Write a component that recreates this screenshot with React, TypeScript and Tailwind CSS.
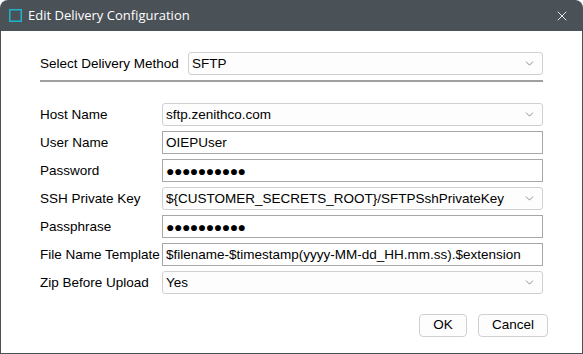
import { ChevronDown, X } from "lucide-react";

const font = { fontFamily: '"Liberation Sans", Arial, sans-serif' };

function SelectBox({ value }: { value: string }) {
  return (
    <div className="flex items-center justify-between h-[23px] flex-1 rounded-[3px] border border-[#d0d0d0] bg-[#fdfdfd] pl-[3px] pr-[6px]">
      <span className="text-[13.5px] text-black leading-none">{value}</span>
      <ChevronDown size={13} strokeWidth={1.2} className="text-[#555]" />
    </div>
  );
}

function TextBox({ value, secret }: { value: string; secret?: boolean }) {
  return (
    <div className="flex items-center h-[23px] flex-1 border border-[#a7a7a7] bg-white pl-[3px]">
      <span
        className={
          secret
            ? "text-[14px] text-black leading-none tracking-[-0.5px]"
            : "text-[13.5px] text-black leading-none"
        }
      >
        {secret ? "●●●●●●●●●●" : value}
      </span>
    </div>
  );
}

const rows: { label: string; value: string; kind: "select" | "text" | "secret" }[] = [
  { label: "Host Name", value: "sftp.zenithco.com", kind: "select" },
  { label: "User Name", value: "OIEPUser", kind: "text" },
  { label: "Password", value: "", kind: "secret" },
  { label: "SSH Private Key", value: "${CUSTOMER_SECRETS_ROOT}/SFTPSshPrivateKey", kind: "select" },
  { label: "Passphrase", value: "", kind: "secret" },
  { label: "File Name Template", value: "$filename-$timestamp(yyyy-MM-dd_HH.mm.ss).$extension", kind: "text" },
  { label: "Zip Before Upload", value: "Yes", kind: "select" },
];

export default function App() {
  return (
    <div className="w-[583px] h-[354px] bg-white" style={font}>
      <div className="flex flex-col h-full rounded-t-[8px] overflow-hidden bg-[#4a5157]">
        <div className="flex items-center h-[31px] shrink-0 pl-[9px] pr-[13px]">
          <svg width="13" height="13" viewBox="0 0 13 13">
            <rect x="0.75" y="0.75" width="11.5" height="11.5" fill="none" stroke="#1fb3cc" strokeWidth="1.5" />
          </svg>
          <span
            className="ml-[6px] text-[13px] text-white"
            style={{ fontFamily: '"Open Sans", "Noto Sans", sans-serif' }}
          >
            Edit Delivery Configuration
          </span>
          <X size={16} strokeWidth={1.3} className="ml-auto text-white" />
        </div>
        <div className="flex-1 mx-[1px] mb-[1px] bg-white px-[39px] pt-[21px] flex flex-col">
          <div className="flex items-center">
            <span className="w-[148px] pt-[1px] text-[13.5px] text-black">Select Delivery Method</span>
            <SelectBox value="SFTP" />
          </div>
          <div className="mt-[5px] h-[2px] bg-[#a0a0a0]" />
          <div className="mt-[21px] flex flex-col gap-[5px]">
            {rows.map((r) => (
              <div key={r.label} className="flex items-center">
                <span className="w-[122px] pt-[2px] text-[13.5px] text-black whitespace-nowrap">{r.label}</span>
                {r.kind === "select" ? (
                  <SelectBox value={r.value} />
                ) : (
                  <TextBox value={r.value} secret={r.kind === "secret"} />
                )}
              </div>
            ))}
          </div>
          <div className="mt-[20px] flex justify-end gap-[11px] mr-[-5px]">
            <button className="w-[48px] h-[23px] rounded-[4px] border border-[#d0d0d0] bg-[#fdfdfd] text-[13.5px] text-black">
              OK
            </button>
            <button className="w-[70px] h-[23px] rounded-[4px] border border-[#d0d0d0] bg-[#fdfdfd] text-[13.5px] text-black">
              Cancel
            </button>
          </div>
        </div>
      </div>
    </div>
  );
}
